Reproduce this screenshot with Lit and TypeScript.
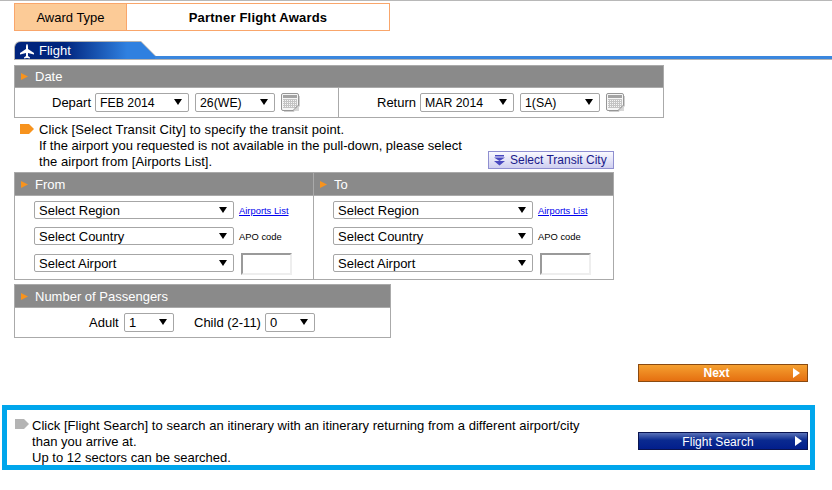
import { LitElement, html, css, svg } from "lit";
import { customElement } from "lit/decorators.js";

const sel = (text: string, cls: string) => html`<div class="sel ${cls}"><span>${text}</span><i></i></div>`;
const cal = html`<svg class="cal" width="19" height="19" viewBox="0 0 19 19">
  <rect x="0.5" y="0.5" width="17" height="17" rx="1.5" fill="#f6f6f6" stroke="#969696"/>
  <rect x="2" y="2" width="14" height="3" fill="#a4a4a4"/>
  ${[6, 8, 10, 12, 14].map((y) => svg`<path d="M2 ${y + 0.5}H16" stroke="#c4c4c4"/>`)}
  ${[3, 5, 7, 9, 11, 13, 15].map((x) => svg`<path d="M${x + 0.5} 6V15" stroke="#c4c4c4"/>`)}
  <path d="M12 18L18 12V18Z" fill="#d8d8d8"/>
  <path d="M12 17.5L17.5 12" stroke="#8c8c8c" fill="none"/>
  <path d="M18.5 3V13L13 18.5H3" fill="none" stroke="#cfcfcf"/>
</svg>`;
const hdrArrow = html`<svg class="ha" width="9" height="9" viewBox="0 0 9 9"><path d="M0 1L7 4.5L0 8Z" fill="#f7931e"/></svg>`;

@customElement("app-root")
export class AppRoot extends LitElement {
  static styles = css`
    :host { display: block; width: 832px; height: 490px; overflow: hidden; background: #fff; font-family: "Liberation Sans", Arial, sans-serif; font-size: 13px; color: #000; }
    .topline { height: 1px; background: #b8b8b8; }
    .page { padding: 2px 0 0 14px; display: flex; flex-direction: column; align-items: flex-start; }
    .award { width: 376px; height: 28px; box-sizing: border-box; border: 1px solid #f9a66b; display: flex; }
    .award .lbl { width: 111px; background: #fccb97; border-right: 1px solid #f9a66b; display: flex; align-items: center; justify-content: center; }
    .award .val { flex: 1; display: flex; align-items: center; justify-content: center; font-weight: bold; letter-spacing: 0.2px; }
    .tabrow { position: relative; margin-top: 10px; width: 818px; height: 20px; }
    .tabrow svg { display: block; }
    .tabtxt { position: absolute; left: 25px; top: 3px; color: #fff; line-height: 14px; }
    .plane { position: absolute; left: 5px; top: 2px; }
    .section { box-sizing: border-box; border: 1px solid #aaa; }
    .date { margin-top: 4px; width: 650px; height: 53px; }
    .hdr { height: 22px; box-sizing: border-box; background: #8a8a8a; color: #fff; display: flex; align-items: center; padding-left: 6px; gap: 5px; border-bottom: 1px solid #aaa; }
    .route .hdr, .pax .hdr { height: 23px; }
    .ha { flex: none; }
    .date .body { display: grid; grid-template-columns: 324px 1fr; height: 29px; }
    .cell { display: flex; align-items: center; gap: 5px; }
    .cell.a { padding-left: 37px; border-right: 1px solid #aaa; }
    .cell.b { padding-left: 38px; }
    .cell > span { width: 38px; flex: none; white-space: nowrap; }
    .sel { box-sizing: border-box; height: 19px; border: 1px solid #a6a6a6; border-radius: 2px; background: #fff; display: flex; align-items: center; padding-left: 4px; position: relative; flex: none; }
    .sel i { position: absolute; right: 6px; top: 5px; width: 0; height: 0; border-left: 4px solid transparent; border-right: 4px solid transparent; border-top: 6px solid #000; }
    .w94 { width: 94px; font-size: 12.3px; } .w80 { width: 80px; font-size: 12.3px; margin-left: 1px; } .w200 { width: 200px; } .w50 { width: 50px; }
    .cal { flex: none; margin-left: 1px; }
    .notes { display: flex; width: 600px; height: 54px; box-sizing: border-box; padding: 4px 0 0 6px; position: relative; line-height: 16px; }
    .tag { flex: none; margin: 2px 5px 0 0; }
    .wide { letter-spacing: 0.12px; }
    .slight { letter-spacing: 0.06px; }
    .transit { position: absolute; right: 0; bottom: 3px; height: 18px; width: 126px; box-sizing: border-box; border: 1px solid #8f8fd0; background: linear-gradient(#fafaff, #cfcff0); color: #1a1a8a; display: flex; align-items: center; padding-left: 5px; gap: 5px; white-space: nowrap; font-size: 12px; }
    .route { width: 600px; height: 108px; display: grid; grid-template-columns: 298px 1fr; }
    .route .col + .col { border-left: 1px solid #aaa; }
    .rbody { padding: 5px 0 0 19px; display: grid; grid-template-columns: 200px auto; column-gap: 5px; grid-auto-rows: 18px; row-gap: 8px; }
    .rbody .last { margin-top: 1px; }
    .link { color: #00e; text-decoration: underline; font-size: 9.4px; align-self: center; }
    .apo { font-size: 9.4px; align-self: center; }
    .rbody > .sel { height: 18px; }
    .code { box-sizing: border-box; width: 51px; height: 22px; margin: 0 0 0 2px; border: 2px solid; border-color: #9a9a9a #eee #eee #9a9a9a; }
    .pax { margin-top: 4px; width: 377px; height: 54px; }
    .pbody { display: flex; align-items: center; height: 29px; padding-left: 74px; gap: 5px; }
    .pbody > span { flex: none; white-space: nowrap; }
    .pbody .ad { width: 30px; }
    .pbody .ch { width: 66px; }
    .pbody .gap { width: 10px; }
    .btn { box-sizing: border-box; width: 170px; height: 18px; position: relative; display: flex; align-items: center; justify-content: center; color: #fff; font-size: 12px; }
    .btn svg { position: absolute; }
    .next { margin: 26px 0 0 624px; border: 1px solid #8a4a10; background: linear-gradient(#f5a030, #e56f10); font-weight: bold; padding-right: 13px; }
    .next svg { right: 7px; top: 3px; }
    .fs { flex: none; border: 1px solid #0a1450; background: linear-gradient(#5a72b8 0, #0a2a90 45%, #021e8c); padding: 1px 10px 0 0; letter-spacing: 0.05px; }
    .fs svg { right: 5px; top: 3px; }
    .box { margin: 23px 0 0 -12px; box-sizing: border-box; width: 813px; height: 65px; border: 5px solid #00a6ec; display: flex; padding: 8px 0 0 8px; line-height: 16px; }
    .box .tag { margin: 1px 3px 0 0; }
    .box .txt { width: 606px; flex: none; letter-spacing: 0.03px; }
    .box .fs { margin-top: 14px; }
  `;

  render() {
    const tri = html`<svg width="7" height="10" viewBox="0 0 7 10"><path d="M0 0L7 5L0 10Z" fill="#fff"/></svg>`;
    const route = (title: string) => html`<div class="col">
      <div class="hdr">${hdrArrow}<span>${title}</span></div>
      <div class="rbody">
        ${sel("Select Region", "w200")}<a class="link">Airports List</a>
        ${sel("Select Country", "w200")}<span class="apo">APO code</span>
        ${sel("Select Airport", "w200 last")}<div class="code"></div>
      </div>
    </div>`;
    return html`
      <div class="topline"></div>
      <div class="page">
        <div class="award"><div class="lbl">Award Type</div><div class="val">Partner Flight Awards</div></div>
        <div class="tabrow">
          <svg width="818" height="20" viewBox="0 0 818 20">
            <defs><linearGradient id="g" x1="0" x2="1" y1="0" y2="0"><stop offset="0.35" stop-color="#00247d"/><stop offset="0.8" stop-color="#2f80e0"/></linearGradient></defs>
            <path d="M0 19V6Q1 0 7 0H127L142 15H818V19Z" fill="#b4b4b4"/>
            <path d="M1 19V6Q2 1 7 1H127L141 15H1Z" fill="url(#g)"/>
            <rect x="1" y="15" width="817" height="3" fill="#3a87de"/>
            <rect x="1" y="15" width="140" height="3" fill="url(#g)"/>
          </svg>
          <svg class="plane" width="16" height="16" viewBox="0 0 16 16"><path d="M8 1Q9 1 9 4V6L15 10V11.5L9 10V13L11 14.5V15.5L8 15L5 15.5V14.5L7 13V10L1 11.5V10L7 6V4Q7 1 8 1Z" fill="#fff"/></svg>
          <span class="tabtxt">Flight</span>
        </div>
        <div class="section date">
          <div class="hdr">${hdrArrow}<span>Date</span></div>
          <div class="body">
            <div class="cell a"><span>Depart</span>${sel("FEB 2014", "w94")}${sel("26(WE)", "w80")}${cal}</div>
            <div class="cell b"><span>Return</span>${sel("MAR 2014", "w94")}${sel("1(SA)", "w80")}${cal}</div>
          </div>
        </div>
        <div class="notes">
          <svg class="tag" width="14" height="10" viewBox="0 0 14 10"><path d="M0 0H9L14 5L9 10H0Z" fill="#f7931e"/></svg>
          <div><div class="wide">Click [Select Transit City] to specify the transit point.</div><div>If the airport you requested is not available in the pull-down, please select</div><div class="slight">the airport from [Airports List].</div></div>
          <div class="transit"><svg width="11" height="11" viewBox="0 0 11 11"><path d="M1 0H10V1.5H1ZM0 2.5H11L5.5 6ZM0 6H11L5.5 10.5Z" fill="#4a4ac0"/></svg>Select Transit City</div>
        </div>
        <div class="section route">${route("From")}${route("To")}</div>
        <div class="section pax">
          <div class="hdr">${hdrArrow}<span>Number of Passengers</span></div>
          <div class="pbody"><span class="ad">Adult</span>${sel("1", "w50")}<div class="gap"></div><span class="ch">Child (2-11)</span>${sel("0", "w50")}</div>
        </div>
        <div class="btn next">Next${tri}</div>
        <div class="box">
          <svg class="tag" width="14" height="10" viewBox="0 0 14 10"><path d="M0 0H9L14 5L9 10H0Z" fill="#b4b4b4"/></svg>
          <div class="txt">Click [Flight Search] to search an itinerary with an itinerary returning from a different airport/city<br/>than you arrive at.<br/>Up to 12 sectors can be searched.</div>
          <div class="btn fs">Flight Search${tri}</div>
        </div>
      </div>`;
  }
}
